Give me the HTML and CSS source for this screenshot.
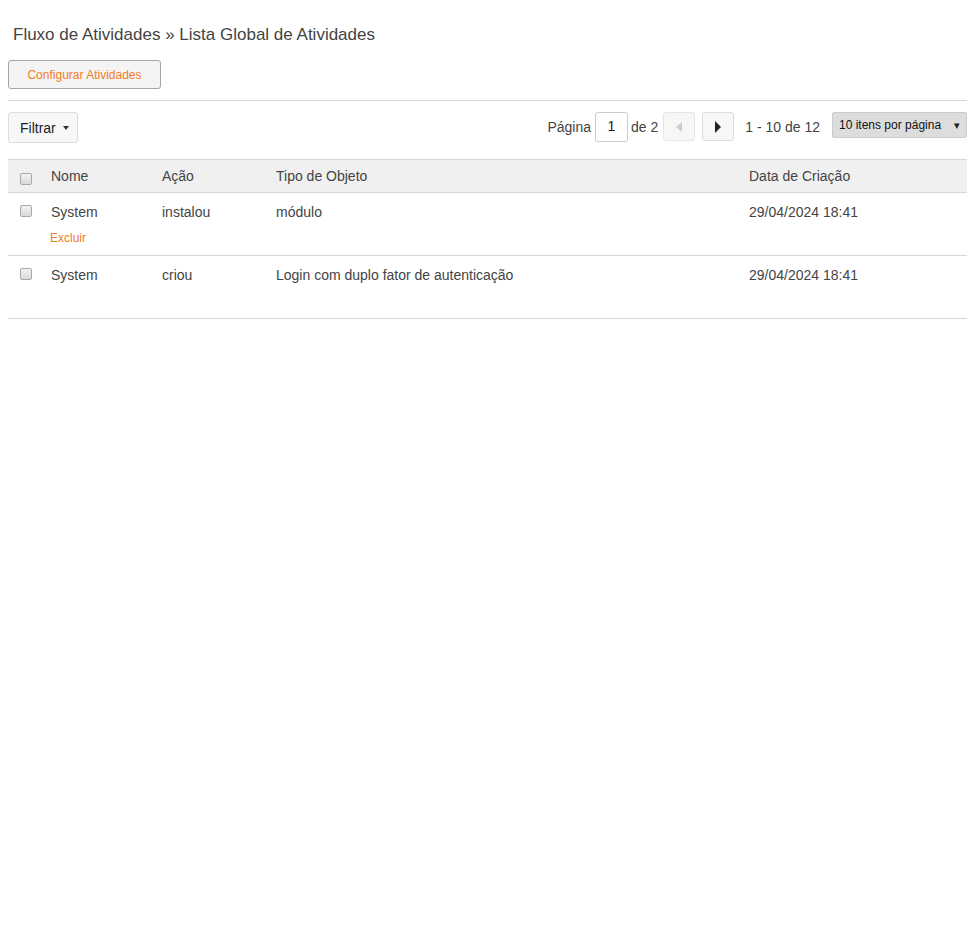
FILE: index.html
```html
<!DOCTYPE html>
<html lang="pt">
<head>
<meta charset="utf-8">
<title>Lista Global de Atividades</title>
<link rel="stylesheet" href="styles.css">
</head>
<body>
<h1 class="title">Fluxo de Atividades <span class="sep">»</span> Lista Global de Atividades</h1>
<button class="btn-config">Configurar Atividades</button>
<div class="rule"></div>
<div class="toolbar">
  <button class="btn-filter">Filtrar <span class="caret"></span></button>
  <div class="pager">
    <span class="lbl">Página</span>
    <span class="page-input">1</span>
    <span class="lbl de">de 2</span>
    <button class="nav disabled"><svg width="6" height="10" viewBox="0 0 6 10"><path d="M6 0 L0 5 L6 10 Z" fill="#ccc"/></svg></button>
    <button class="nav"><svg width="6" height="12" viewBox="0 0 6 12"><path d="M0 0 L6 6 L0 12 Z" fill="#222"/></svg></button>
    <span class="range">1 - 10 de 12</span>
    <div class="select"><span>10 itens por página</span><span class="sel-arrow">▾</span></div>
  </div>
</div>
<div class="grid">
  <div class="row head">
    <div class="cell cb"><span class="check"></span></div>
    <div class="cell">Nome</div>
    <div class="cell">Ação</div>
    <div class="cell">Tipo de Objeto</div>
    <div class="cell">Data de Criação</div>
  </div>
  <div class="row">
    <div class="cell cb"><span class="check"></span></div>
    <div class="cell name">System<a class="act">Excluir</a></div>
    <div class="cell">instalou</div>
    <div class="cell">módulo</div>
    <div class="cell">29/04/2024 18:41</div>
  </div>
  <div class="row">
    <div class="cell cb"><span class="check"></span></div>
    <div class="cell name">System<a class="act hidden">Excluir</a></div>
    <div class="cell">criou</div>
    <div class="cell">Login com duplo fator de autenticação</div>
    <div class="cell">29/04/2024 18:41</div>
  </div>
</div>
</body>
</html>
```
FILE: styles.css
```css
body {
  margin: 8px;
  font-family: "Liberation Sans", Arial, sans-serif;
  color: #444;
  font-size: 14px;
  background: #fff;
}
.title {
  margin: 16px 0 0;
  padding-left: 5px;
  font-size: 17px;
  line-height: 22px;
  font-weight: normal;
  color: #444;
}
.sep { color: #444; }
.btn-config {
  display: block;
  margin-top: 14px;
  width: 153px;
  height: 29px;
  padding: 0;
  background: #f4f4f4;
  border: 1px solid #a6a6a6;
  border-radius: 3px;
  color: #f27d1d;
  font-family: inherit;
  font-size: 12px;
}
.rule {
  margin-top: 11px;
  height: 1px;
  background: #d6d6d6;
}
.toolbar {
  margin-top: 11px;
  display: flex;
  justify-content: space-between;
  align-items: flex-start;
}
.btn-filter {
  height: 31px;
  width: 70px;
  padding: 0 0 0 11px;
  text-align: left;
  background: #f7f7f7;
  border: 1px solid #ddd;
  border-radius: 3px;
  font-family: inherit;
  font-size: 14px;
  color: #222;
  display: flex;
  align-items: center;
}
.caret {
  display: inline-block;
  margin-left: 7px;
  width: 0; height: 0;
  border-left: 3px solid transparent;
  border-right: 3px solid transparent;
  border-top: 4px solid #333;
}
.pager {
  display: flex;
  align-items: flex-start;
}
.lbl { line-height: 30px; }
.page-input {
  margin-left: 4px;
  width: 31px;
  height: 28px;
  border: 1px solid #ccc;
  border-radius: 3px;
  text-align: center;
  line-height: 27px;
  color: #222;
}
.de { margin-left: 3px; }
.nav {
  margin-left: 5px;
  width: 32px;
  height: 29px;
  padding: 0;
  border: 1px solid #ddd;
  border-radius: 3px;
  background: #f7f7f7;
  display: flex;
  align-items: center;
  justify-content: center;
}
.nav + .nav { margin-left: 7px; }
.nav.disabled { background: #f7f7f7; border-color: #e6e6e6; }
.range {
  margin-left: 11px;
  line-height: 30px;
}
.select {
  margin-left: 12px;
  width: 135px;
  height: 26px;
  box-sizing: border-box;
  background: #ddd;
  border: 1px solid #ccc;
  border-radius: 2px;
  display: flex;
  justify-content: space-between;
  align-items: center;
  padding: 0 6px 0 6px;
  font-size: 12px;
  color: #111;
}
.sel-arrow { font-size: 11px; color: #222; }
.grid {
  margin-top: 16px;
  border-top: 1px solid #d6d6d6;
}
.row {
  display: grid;
  grid-template-columns: 35px 111px 114px 473px 1fr;
  border-bottom: 1px solid #d6d6d6;
  height: 63px;
  box-sizing: border-box;
}
.row.head {
  background: #f0f0f0;
  height: 33px;
}
.cell {
  padding: 11px 0 0 8px;
  line-height: 16px;
}
.head .cell { padding-top: 8px; }
.cell.cb { padding: 12px 0 0 12px; }
.head .cell.cb { padding-top: 13px; }
.check {
  display: block;
  width: 12px;
  height: 12px;
  box-sizing: border-box;
  border: 1px solid #a8a8a8;
  border-radius: 2px;
  background: linear-gradient(#f2f2f2, #d9d9d9);
}
.name { display: flex; flex-direction: column; }
.act {
  margin-top: 11px;
  margin-left: -1px;
  font-size: 12px;
  line-height: 14px;
  color: #f27d1d;
}
.act.hidden { visibility: hidden; }
```
